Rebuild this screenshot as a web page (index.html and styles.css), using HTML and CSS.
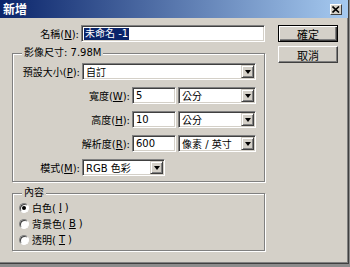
FILE: index.html
```html
<!DOCTYPE html>
<html lang="zh-Hant">
  <head>
    <meta charset="UTF-8" />
    <title>新增</title>
    <link rel="stylesheet" href="styles.css">
  </head>
  <body>
    <!-- DIALOG WINDOW -->
    <div class="window">
      <div class="titlebar">
        <span class="title">新增</span>
        <span class="close">
          <svg width="8" height="7" viewBox="0 0 8 7">
            <path d="M0.5 0.5 L7 6.5 M7 0.5 L0.5 6.5" stroke="#000" stroke-width="1.6" />
          </svg>
        </span>
      </div>

      <div class="content">
        <div class="main">
          <!-- name -->
          <div class="row">
            <span class="lbl lbl-short">名稱(<u>N</u>):</span>
            <div class="field field-name"><span class="picked">未命名 -1</span></div>
          </div>

          <!-- image size -->
          <fieldset class="group group-size">
            <legend>影像尺寸: 7.98M</legend>
            <div class="rows">
              <div class="row">
                <span class="lbl lbl-short">預設大小(<u>P</u>):</span>
                <div class="field select select-preset">自訂<span class="arrow"></span></div>
              </div>
              <div class="row">
                <span class="lbl lbl-long">寬度(<u>W</u>):</span>
                <div class="field num">5</div>
                <div class="field select unit">公分<span class="arrow"></span></div>
              </div>
              <div class="row">
                <span class="lbl lbl-long">高度(<u>H</u>):</span>
                <div class="field num">10</div>
                <div class="field select unit">公分<span class="arrow"></span></div>
              </div>
              <div class="row">
                <span class="lbl lbl-long">解析度(<u>R</u>):</span>
                <div class="field num">600</div>
                <div class="field select unit">像素 / 英寸<span class="arrow"></span></div>
              </div>
              <div class="row">
                <span class="lbl lbl-short">模式(<u>M</u>):</span>
                <div class="field select select-mode">RGB 色彩<span class="arrow"></span></div>
              </div>
            </div>
          </fieldset>

          <!-- contents -->
          <fieldset class="group group-fill">
            <legend>內容</legend>
            <div class="radios">
              <div class="radio-row"><span class="radio on"></span>白色(<u>I</u>)</div>
              <div class="radio-row"><span class="radio"></span>背景色(<u>B</u>)</div>
              <div class="radio-row"><span class="radio"></span>透明(<u>T</u>)</div>
            </div>
          </fieldset>
        </div>

        <div class="side">
          <div class="btn btn-default">確定</div>
          <div class="btn">取消</div>
        </div>
      </div>
    </div>
  </body>
</html>
```

FILE: styles.css
```css
/* Global */
* {
  box-sizing: border-box;
}
html {
  background: #8c8c8c;
}
body {
  margin: 0;
  font-family: "DejaVu Sans", "Noto Sans CJK TC", sans-serif;
  font-size: 10px;
  color: #000;
}
u {
  text-decoration: underline;
}

/* WINDOW FRAME */
.window {
  width: 349px;
  height: 264px;
  background: #d4d0c8;
  border-right: 1px solid #404040;
  border-bottom: 1px solid #404040;
  box-shadow: inset -1px -1px 0 #808080;
}
.titlebar {
  height: 18px;
  display: flex;
  align-items: center;
  justify-content: space-between;
  padding: 0 6px 0 3px;
  background: linear-gradient(to right, #0a246a 0%, #a6caf0 100%);
}
.title {
  color: #fff;
  font-family: "Noto Sans CJK TC", sans-serif;
  font-size: 12px;
  font-weight: bold;
  line-height: 1;
}
.close {
  width: 12px;
  height: 11px;
  display: flex;
  align-items: center;
  justify-content: center;
  background: #d4d0c8;
  border: 1px solid;
  border-color: #fff #404040 #404040 #fff;
}

/* LAYOUT */
.content {
  display: flex;
  padding: 7px 0 0 12px;
}
.main {
  width: 253px;
}
.side {
  width: 60px;
  margin-left: 13px;
  display: flex;
  flex-direction: column;
  gap: 4px;
}

/* ROWS + LABELS */
.row {
  display: flex;
  align-items: center;
  height: 17px;
}
.lbl {
  text-align: right;
  padding-right: 2px;
  white-space: nowrap;
}
.lbl-short {
  width: 69px;
}
.lbl-long {
  width: 119px;
}

/* SUNKEN FIELDS */
.field {
  height: 17px;
  display: flex;
  align-items: center;
  padding: 1px 1px 1px 3px;
  background: #fff;
  border: 1px solid;
  border-color: #808080 #fff #fff #808080;
  box-shadow: inset 1px 1px 0 #404040, inset -1px -1px 0 #d4d0c8;
  white-space: nowrap;
}
.field-name {
  width: 184px;
  padding-left: 2px;
}
.picked {
  background: #0a246a;
  color: #fff;
  padding: 0 1px;
  line-height: 12px;
}
.num {
  width: 44px;
}
.unit {
  width: 78px;
  margin-left: 2px;
}
.select-preset {
  width: 174px;
}
.select-mode {
  width: 83px;
}
.arrow {
  margin-left: auto;
  width: 13px;
  height: 13px;
  display: flex;
  align-items: center;
  justify-content: center;
  background: #d4d0c8;
  border: 1px solid;
  border-color: #d4d0c8 #404040 #404040 #d4d0c8;
  box-shadow: inset 1px 1px 0 #fff, inset -1px -1px 0 #808080;
}
.arrow::after {
  content: "";
  border-left: 3px solid transparent;
  border-right: 3px solid transparent;
  border-top: 4px solid #000;
}

/* GROUP BOXES */
.group {
  margin: 5px 0 0;
  padding: 4px 0 5px;
  min-width: 0;
  border: 1px solid #808080;
  box-shadow: inset 1px 1px 0 #fff, 1px 1px 0 #fff;
}
.group legend {
  margin-left: 9px;
  padding: 0 2px;
  line-height: 12px;
  background: #d4d0c8;
}
.rows {
  display: flex;
  flex-direction: column;
  gap: 7px;
}
.group-fill {
  padding: 2px 0 4px;
}
.radios {
  display: flex;
  flex-direction: column;
  gap: 3px;
}
.radio-row {
  height: 13px;
  display: flex;
  align-items: center;
  gap: 3px;
  padding-left: 6px;
}
.radio {
  width: 10px;
  height: 10px;
  border-radius: 50%;
  display: flex;
  align-items: center;
  justify-content: center;
  background: #fff;
  border: 1px solid;
  border-color: #808080 #fff #fff #808080;
  box-shadow: inset 1px 1px 0 #404040;
}
.radio.on::after {
  content: "";
  width: 4px;
  height: 4px;
  border-radius: 50%;
  background: #000;
}

/* BUTTONS */
.btn {
  width: 60px;
  height: 17px;
  display: flex;
  align-items: center;
  justify-content: center;
  font-size: 11px;
  background: #d4d0c8;
  border: 1px solid;
  border-color: #fff #404040 #404040 #fff;
  box-shadow: inset -1px -1px 0 #808080;
}
.btn-default {
  border: 1px solid #000;
  box-shadow: inset 1px 1px 0 #fff, inset -1px -1px 0 #404040, inset -2px -2px 0 #808080;
}
```
